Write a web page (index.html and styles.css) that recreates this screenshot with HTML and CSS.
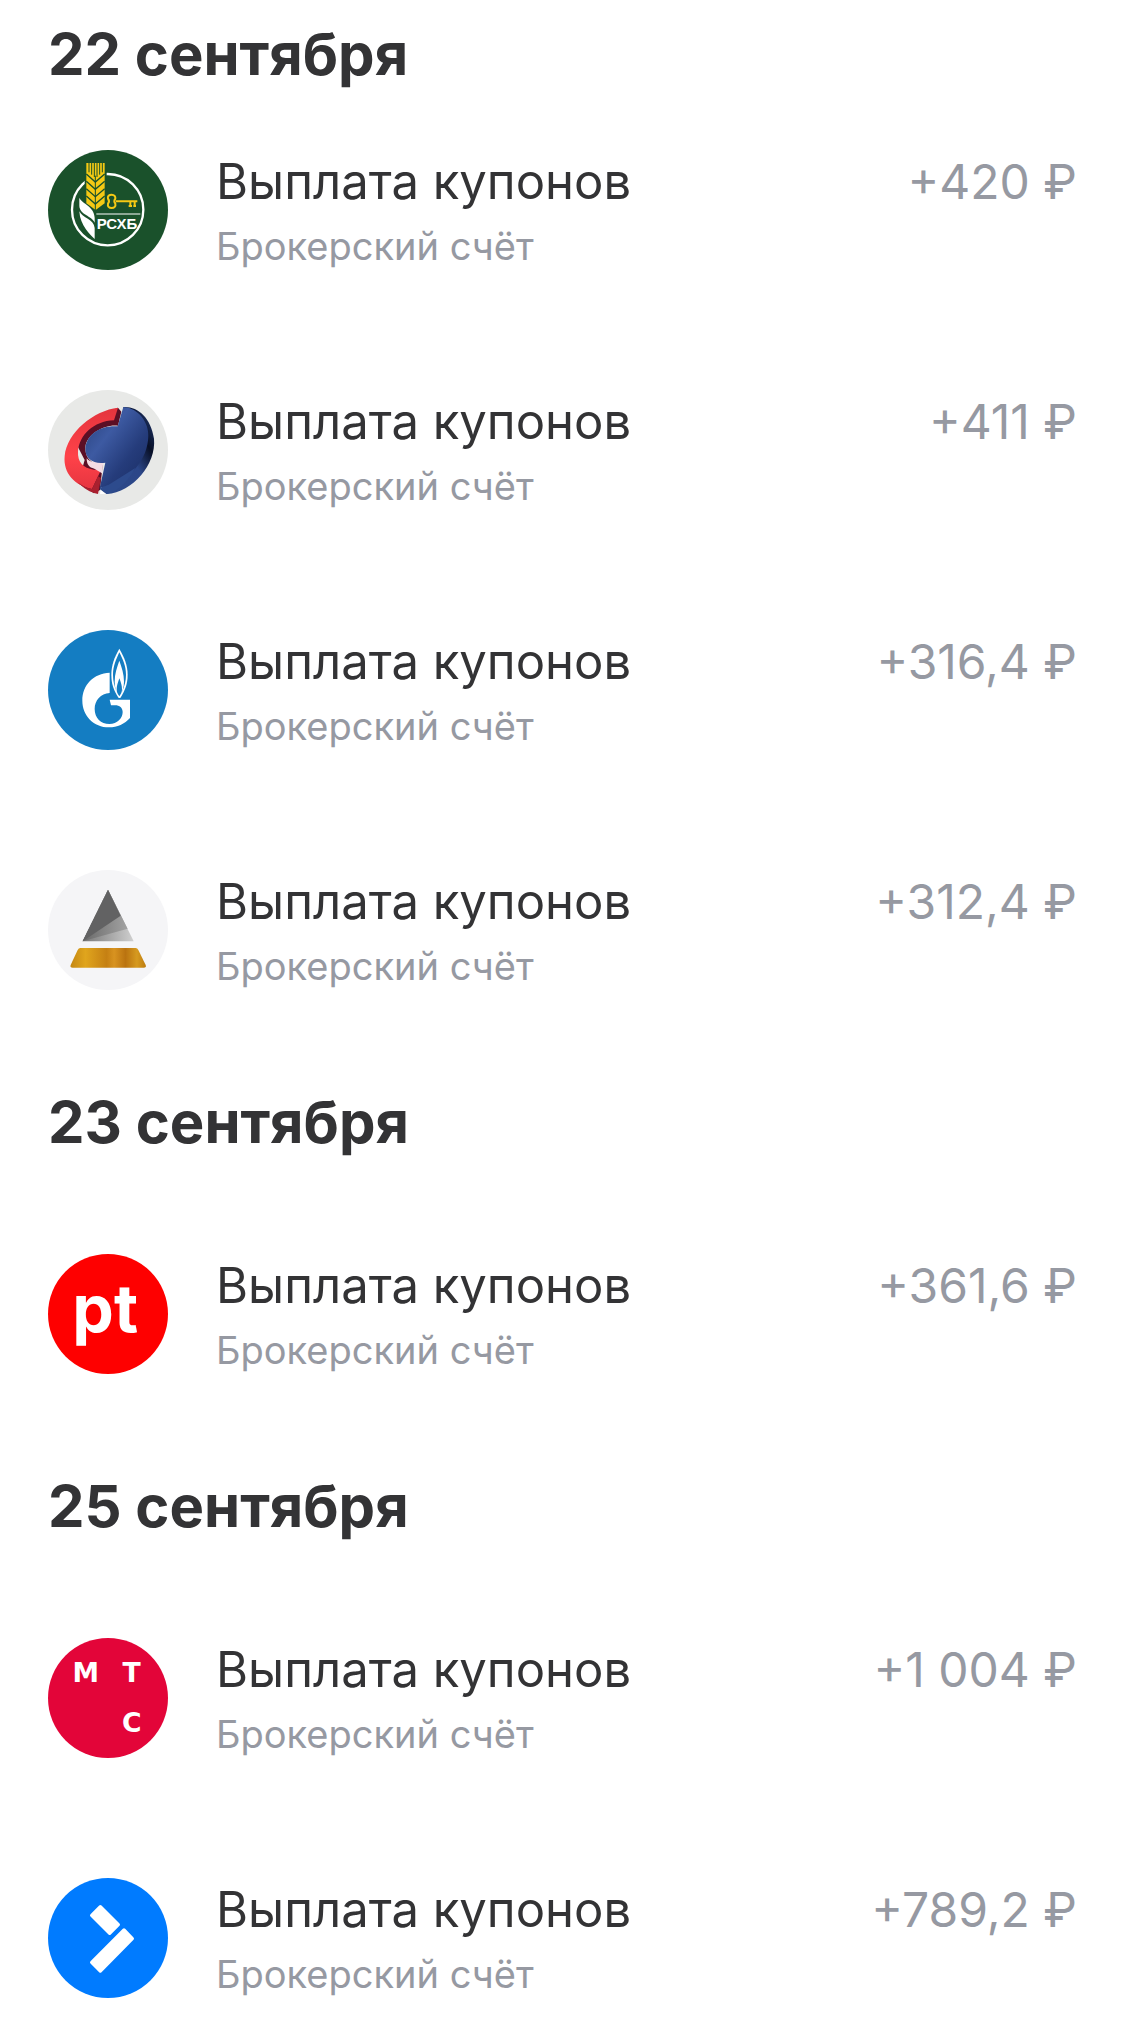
FILE: index.html
```html
<!DOCTYPE html>
<html lang="ru">
<head>
<meta charset="utf-8">
<meta name="viewport" content="width=device-width, initial-scale=1">
<title>Выплаты</title>
<link rel="stylesheet" href="styles.css">
</head>
<body>
<main class="feed">
  <section class="day">
    <h2 class="day-title">22 сентября</h2>
    <ul class="operations">
      <li class="operation">
        <svg class="logo" viewBox="24 27 360 360" aria-hidden="true">
          <circle cx="204" cy="207" r="180" fill="#1a512b"/>
          <circle cx="203" cy="206" r="107" fill="none" stroke="#fff" stroke-width="7"/>
          <path d="M134 60h66v136l-31 22-35-18z" fill="#1a512b"/>
          <path d="M139 66h55v121l-27 20-28-20z" fill="#f5c914"/>
          <path d="M147 66v28M155 66v35M163 66v42M171 66v42M179 66v35M187 66v28M166 104v103" stroke="#1a512b" stroke-width="3"/>
          <path d="M139 99l27 24 28-24M139 121l27 24 28-24M139 143l27 24 28-24M139 165l27 24 28-24" fill="none" stroke="#1a512b" stroke-width="4"/>
          <path d="M118 170c9 20 44 24 46 60v15c-9-22-44-22-46-50zM118 211c9 20 44 24 46 50v33c-12-12-44-40-46-83z" fill="#fff"/>
          <path d="M215 161c8 0 12 6 11 12-4 5-4 10 0 15 2 8-3 13-11 13s-13-5-11-13c4-5 4-10 0-15-2-7 3-12 11-12z" fill="none" stroke="#f5c914" stroke-width="6"/>
          <path d="M228 181h64M271 181v17M284 181v17M266 195h10M280 195h8" fill="none" stroke="#f5c914" stroke-width="6"/>
          <path d="M169 219h132" stroke="#fff" stroke-width="3"/>
          <text class="mark-rshb" x="170" y="264">РСХБ</text>
        </svg>
        <div class="details">
          <h3 class="name">Выплата купонов</h3>
          <p class="account">Брокерский счёт</p>
        </div>
        <p class="amount">+420 ₽</p>
      </li>
      <li class="operation">
        <svg class="logo" viewBox="24 27 360 360" aria-hidden="true">
          <defs>
            <linearGradient id="ball" x1="0" y1="0" x2="1" y2="1">
              <stop offset="0" stop-color="#253e78"/><stop offset=".35" stop-color="#3d5aa2"/><stop offset=".65" stop-color="#253c7b"/><stop offset="1" stop-color="#182b61"/>
            </linearGradient>
            <linearGradient id="rim" x1="0" y1="1" x2="1" y2="0">
              <stop offset="0" stop-color="#2c4989"/><stop offset=".5" stop-color="#2b4688"/><stop offset=".72" stop-color="#080f26"/><stop offset="1" stop-color="#26417f"/>
            </linearGradient>
            <linearGradient id="arc" x1="0" y1="0" x2="0" y2="1">
              <stop offset="0" stop-color="#e4343d"/><stop offset=".6" stop-color="#ff4249"/><stop offset="1" stop-color="#e63540"/>
            </linearGradient>
          </defs>
          <circle cx="204" cy="207" r="180" fill="#e8e9e7"/>
          <path d="M234 80l10 12-10 42c-40-5-95 25-98 65 0 28 12 50 52 52l-8 76-18 10-48-30 20-70-26-50 50-75z" fill="#5b0f25"/>
          <path d="M234 80l-12 38c-62 2-104 45-108 93-2 32 16 51 47 55l22 1-27 57c-53-11-87-48-82-99 7-72 88-137 160-145z" fill="url(#arc)"/>
          <path d="M115 304c10 10 24 18 41 20l18-38 9 5-9 48c-24-5-44-16-59-35z" fill="#a9202f"/>
          <path d="M140 232c8 12 26 12 50 10l-4 35-23-14c-16-3-23-13-23-31z" fill="#f4dce3"/>
          <path d="M250 78c42-3 83 31 92 95 7 77-63 160-142 166l-21-15 90-70z" fill="url(#rim)"/>
          <path d="M250 78c34 0 76 36 75 86-1 71-57 136-120 148l-26 10 17-77c-34 5-61-9-60-43 4-45 50-70 97-66z" fill="url(#ball)"/>
          <path d="M179 322l26-10 81-51c-20 37-52 71-86 78z" fill="#2d4b8d"/>
          <path d="M182 328l-2 11 17 0z" fill="#fff"/>
        </svg>
        <div class="details">
          <h3 class="name">Выплата купонов</h3>
          <p class="account">Брокерский счёт</p>
        </div>
        <p class="amount">+411 ₽</p>
      </li>
      <li class="operation">
        <svg class="logo" viewBox="24 27 360 360" aria-hidden="true">
          <circle cx="204" cy="207" r="180" fill="#147dc2"/>
          <path d="M209 155v61c-27 2-45 22-45 48 0 27 19 45 44 45 24 0 40-17 40-36 0-12-9-20-23-20h-12l-4-17h61v55c-16 18-38 28-63 28-46 0-80-35-80-80 0-48 34-82 82-84z" fill="#fff"/>
          <path d="M238 83c15 26 25 50 25 78 0 27-8 48-22 70h-5c-15-22-22-43-22-70 0-28 9-52 24-78z" fill="#fff"/>
          <path d="M238 94c11 22 20 42 20 67 0 18-4 34-12 51 1-15-3-26-8-40-5 14-10 25-8 40-7-17-11-33-11-51 0-25 9-45 19-67z" fill="#147dc2"/>
          <path d="M238 119c7 20 14 39 14 63 0 16-5 31-12 45h-4c-8-14-12-29-12-45 0-24 7-43 14-63z" fill="#fff"/>
          <path d="M238 172c5 13 8 22 8 33 0 8-3 14-8 21-5-7-8-13-8-21 0-11 4-20 8-33z" fill="#147dc2"/>
        </svg>
        <div class="details">
          <h3 class="name">Выплата купонов</h3>
          <p class="account">Брокерский счёт</p>
        </div>
        <p class="amount">+316,4 ₽</p>
      </li>
      <li class="operation">
        <svg class="logo" viewBox="24 27 360 360" aria-hidden="true">
          <defs>
            <linearGradient id="gold" x1="0" y1="0" x2="1" y2="0">
              <stop offset="0" stop-color="#c48713"/><stop offset=".2" stop-color="#e0a51d"/><stop offset=".48" stop-color="#c58013"/><stop offset=".58" stop-color="#d89320"/><stop offset=".73" stop-color="#ba7310"/><stop offset=".88" stop-color="#d69a20"/><stop offset="1" stop-color="#bd7c10"/>
            </linearGradient>
            <linearGradient id="steel" x1="0" y1="0" x2="1" y2="0">
              <stop offset="0" stop-color="#696969"/><stop offset="1" stop-color="#a3a3a3"/>
            </linearGradient>
            <linearGradient id="silver" x1="0" y1="0" x2="1" y2="0">
              <stop offset="0" stop-color="#777"/><stop offset="1" stop-color="#cfcfcf"/>
            </linearGradient>
          </defs>
          <circle cx="204" cy="207" r="180" fill="#f5f5f7"/>
          <path d="M204 86l77 155H128z" fill="url(#silver)"/>
          <path d="M204 86l59 117-135 38z" fill="url(#steel)"/>
          <path d="M204 86l38 78-114 77z" fill="#626263"/>
          <path d="M121 261h166q5 0 8 6l22 45q3 8-6 8H98q-9 0-6-8l21-45q3-6 8-6z" fill="url(#gold)"/>
        </svg>
        <div class="details">
          <h3 class="name">Выплата купонов</h3>
          <p class="account">Брокерский счёт</p>
        </div>
        <p class="amount">+312,4 ₽</p>
      </li>
    </ul>
  </section>

  <section class="day">
    <h2 class="day-title">23 сентября</h2>
    <ul class="operations">
      <li class="operation">
        <svg class="logo" viewBox="24 27 360 360" aria-hidden="true">
          <circle cx="204" cy="207" r="180" fill="#fe0000"/>
          <text class="mark-pt" x="97" y="260">pt</text>
        </svg>
        <div class="details">
          <h3 class="name">Выплата купонов</h3>
          <p class="account">Брокерский счёт</p>
        </div>
        <p class="amount">+361,6 ₽</p>
      </li>
    </ul>
  </section>

  <section class="day">
    <h2 class="day-title">25 сентября</h2>
    <ul class="operations">
      <li class="operation">
        <svg class="logo" viewBox="24 27 360 360" aria-hidden="true">
          <circle cx="204" cy="207" r="180" fill="#e30539"/>
          <g class="mark-mts">
            <text x="137" y="158">М</text>
            <text x="275" y="158">Т</text>
            <text x="275" y="308">С</text>
          </g>
        </svg>
        <div class="details">
          <h3 class="name">Выплата купонов</h3>
          <p class="account">Брокерский счёт</p>
        </div>
        <p class="amount">+1 004 ₽</p>
      </li>
      <li class="operation">
        <svg class="logo" viewBox="24 27 360 360" aria-hidden="true">
          <circle cx="204" cy="207" r="180" fill="#007bff"/>
          <path d="M181 113l54 54-26 26-54-54zM252 183l25 26-96 97-26-26z" fill="#fff" stroke="#fff" stroke-width="10" stroke-linejoin="round"/>
        </svg>
        <div class="details">
          <h3 class="name">Выплата купонов</h3>
          <p class="account">Брокерский счёт</p>
        </div>
        <p class="amount">+789,2 ₽</p>
      </li>
    </ul>
  </section>
</main>
</body>
</html>
```
FILE: styles.css
```css
* {
  box-sizing: border-box;
}

body {
  margin: 0;
  background: #fff;
  color: #333335;
  font-family: Inter, "Noto Sans", sans-serif;
}

h2,
h3,
p,
ul {
  margin: 0;
  padding: 0;
}

.feed {
  padding: 0 48px;
}

.day-title {
  padding: 36px 0;
  font-size: 58px;
  font-weight: 700;
  line-height: 72px;
}

.day:first-child .day-title {
  padding: 18px 0 0;
}

.operations {
  list-style: none;
}

.operation {
  display: flex;
  align-items: flex-start;
  padding: 60px 0 52px;
}

.day:last-child .operation:last-child {
  padding-bottom: 23px;
}

.logo {
  flex: none;
  width: 120px;
  height: 120px;
  margin-right: 48px;
}

.details {
  flex: 1;
  min-width: 0;
}

.name,
.amount {
  font-size: 49px;
  font-weight: 400;
  line-height: 64px;
}

.account {
  color: #9699a2;
  font-size: 38px;
  line-height: 64px;
}

.amount {
  color: #9699a2;
  font-size: 48px;
  white-space: nowrap;
}

.mark-rshb {
  fill: #fff;
  font: 700 45px "Liberation Sans", sans-serif;
}

.mark-pt {
  fill: #fff;
  font: 700 198px Inter, sans-serif;
}

.mark-mts {
  fill: #fff;
  font: 700 80px "DejaVu Sans", sans-serif;
  text-anchor: middle;
}
```
